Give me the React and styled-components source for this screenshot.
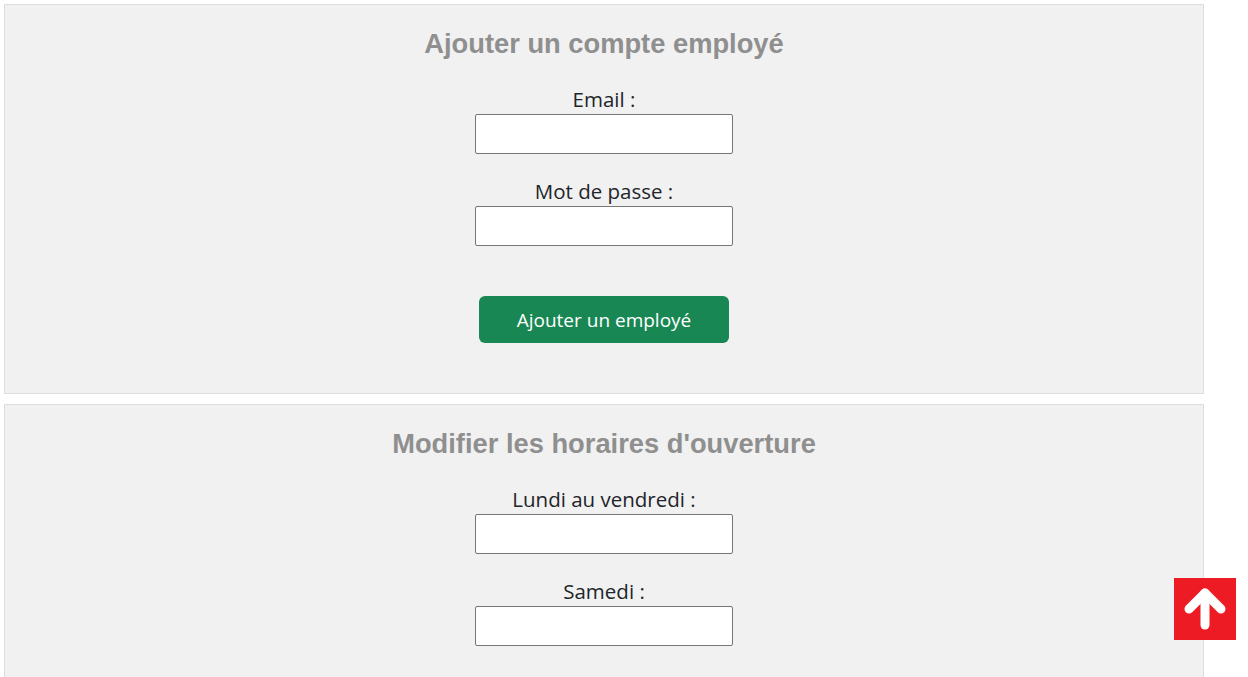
import React from "react";
import styled, { createGlobalStyle } from "styled-components";

const GlobalStyle = createGlobalStyle`
  html, body {
    margin: 0;
    padding: 0;
    background: #fff;
  }
  body {
    font-family: "Open Sans", "Noto Sans", sans-serif;
    color: #212529;
  }
`;

const Page = styled.main`
  display: flex;
  flex-direction: column;
  gap: 10px;
  padding: 4px;
`;

const Panel = styled.section`
  width: 1200px;
  box-sizing: border-box;
  background: #f1f1f1;
  border: 1px solid #dedede;
  padding: 24px 0 ${(p) => p.$bottom || 50}px;
  display: flex;
  flex-direction: column;
  align-items: center;
`;

const Title = styled.h2`
  margin: 0 0 27px;
  font-family: "Liberation Sans", Arial, sans-serif;
  font-weight: 700;
  font-size: 27.3px;
  line-height: 30px;
  color: #8f8f8f;
`;

const Fields = styled.div`
  display: flex;
  flex-direction: column;
  align-items: center;
  gap: 24px;
`;

const Field = styled.label`
  display: flex;
  flex-direction: column;
  align-items: center;
  gap: 2px;
  font-size: 20.5px;
  line-height: 26px;
  color: #212529;
`;

const Input = styled.input`
  width: 258px;
  height: 40px;
  box-sizing: border-box;
  border: 1px solid #767676;
  border-radius: 2px;
  background: #fff;
  padding: 0 6px;
  font: inherit;
`;

const Submit = styled.button`
  margin-top: 50px;
  width: 250px;
  height: 47px;
  border: none;
  border-radius: 6px;
  background: #198754;
  color: #fff;
  font-family: "Open Sans", "Noto Sans", sans-serif;
  font-size: 19px;
  cursor: pointer;
`;

const ScrollTop = styled.button`
  position: fixed;
  right: 12px;
  bottom: 37px;
  width: 62px;
  height: 62px;
  border: none;
  padding: 0;
  background: #ed1c24;
  display: flex;
  align-items: center;
  justify-content: center;
  cursor: pointer;
`;

const ArrowUp = () => (
  <svg width="62" height="62" viewBox="0 0 62 62">
    <g stroke="#fff" strokeWidth="9" strokeLinecap="round" strokeLinejoin="round" fill="none">
      <path d="M31 15 V47" />
      <path d="M15 31 L31 15 L47 31" />
    </g>
  </svg>
);

export default function App() {
  return (
    <>
      <GlobalStyle />
      <Page>
        <Panel>
          <Title>Ajouter un compte employé</Title>
          <Fields>
            <Field>
              Email :
              <Input type="email" />
            </Field>
            <Field>
              Mot de passe :
              <Input type="password" />
            </Field>
          </Fields>
          <Submit>Ajouter un employé</Submit>
        </Panel>
        <Panel>
          <Title>Modifier les horaires d'ouverture</Title>
          <Fields>
            <Field>
              Lundi au vendredi :
              <Input type="text" />
            </Field>
            <Field>
              Samedi :
              <Input type="text" />
            </Field>
          </Fields>
        </Panel>
      </Page>
      <ScrollTop aria-label="Remonter">
        <ArrowUp />
      </ScrollTop>
    </>
  );
}
